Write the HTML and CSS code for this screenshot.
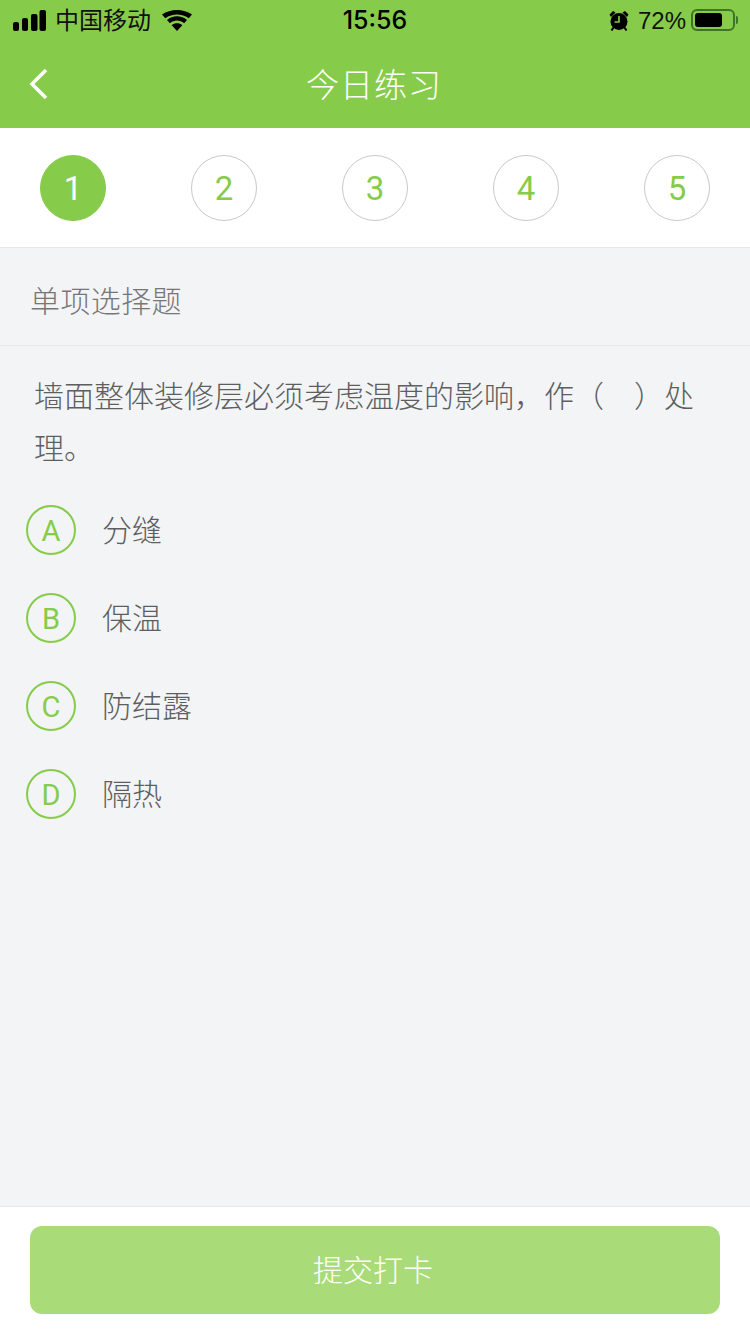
FILE: index.html
```html
<!DOCTYPE html>
<html lang="zh">
<head>
    <meta charset="UTF-8">
    <title>今日练习</title>
    <link rel="stylesheet" href="styles.css">
</head>
<body>
    <div id="page">
        <div id="header">
            <div id="statusBar">
                <div class="status-left">
                    <svg class="signal" width="33" height="21" viewBox="0 0 33 21">
                        <rect x="0" y="12" width="6" height="9" rx="2"/>
                        <rect x="9" y="8" width="6" height="13" rx="2"/>
                        <rect x="18" y="4" width="6.500" height="17" rx="2"/>
                        <rect x="26.500" y="0" width="6.500" height="21" rx="2"/>
                    </svg>
                    <span class="carrier">中国移动</span>
                    <svg class="wifi" width="30" height="21" viewBox="0 0 30 21">
                        <path d="M15 21l-5.300-5.800c3-2.600 7.600-2.600 10.600 0z"/>
                        <path d="M7.900 13.200l-2.900-3.200c5.700-4.900 14.300-4.900 20 0l-2.900 3.200c-4.100-3.500-10.100-3.500-14.200 0z"/>
                        <path d="M3.300 8.200l-3.300-3.600c8.500-6.100 21.500-6.100 30 0l-3.300 3.600c-6.900-5-16.500-5-23.400 0z"/>
                    </svg>
                </div>
                <div class="status-time">15:56</div>
                <div class="status-right">
                    <svg class="alarm" width="20" height="21" viewBox="0 0 20 21">
                        <path d="M0.500 4.500l3.500-3.500 2.500 1.500-4.500 4.500zM19.500 4.500l-3.500-3.500-2.500 1.500 4.500 4.500z"/>
                        <circle cx="10" cy="11.500" r="8.500"/>
                        <path d="M10 6v6h-4.500" fill="none" stroke="#86cc4a" stroke-width="1.600"/>
                        <path d="M4.500 17.500l-2 3M15.500 17.500l2 3" stroke="#000" stroke-width="2"/>
                    </svg>
                    <span class="battery-text">72%</span>
                    <div class="battery">
                        <div class="battery-fill"></div>
                    </div>
                    <div class="battery-cap"></div>
                </div>
            </div>
            <div id="navBar">
                <svg class="back" width="20" height="32" viewBox="0 0 20 32">
                    <path d="M17 2L3 16l14 14" fill="none" stroke="#fff" stroke-width="3.500"/>
                </svg>
                <h1>今日练习</h1>
            </div>
        </div>

        <div id="steps">
            <div class="step active">1</div>
            <div class="step">2</div>
            <div class="step">3</div>
            <div class="step">4</div>
            <div class="step">5</div>
        </div>

        <div id="main">
            <div class="type-title">单项选择题</div>
            <div class="question">墙面整体装修层必须考虑温度的影响，作（&emsp;）处理。</div>
            <ul class="options">
                <li><span class="letter">A</span><span class="answer">分缝</span></li>
                <li><span class="letter">B</span><span class="answer">保温</span></li>
                <li><span class="letter">C</span><span class="answer">防结露</span></li>
                <li><span class="letter">D</span><span class="answer">隔热</span></li>
            </ul>
        </div>

        <div id="footer">
            <button id="submitBtn">提交打卡</button>
        </div>
    </div>
</body>
</html>
```

FILE: styles.css
```css
* { box-sizing: border-box; }
body {
    margin: 0;
    padding: 0;
    font-family: "Liberation Sans", Arial, "Noto Sans CJK SC", sans-serif;
    background: #f2f4f6;
}
#page {
    width: 750px;
    height: 1334px;
    display: flex;
    flex-direction: column;
    overflow: hidden;
}

/* top green area */
#header {
    height: 128px;
    background: #86cc4a;
    flex-shrink: 0;
}
#statusBar {
    height: 40px;
    display: flex;
    align-items: center;
    justify-content: space-between;
    padding: 0 12px 0 13px;
    color: #000;
    position: relative;
}
.status-left, .status-right { display: flex; align-items: center; }
.signal { margin-right: 9px; }
.carrier { font-size: 24px; color: #111; margin-bottom: 3px; }
.wifi { margin-left: 11px; }
.status-time {
    position: absolute;
    left: 0;
    right: 0;
    text-align: center;
    font-size: 25px;
    font-family: Inter, "Liberation Sans", sans-serif;
    font-weight: 500;
}
.alarm { margin-right: 9px; }
.battery-text { font-size: 24px; color: #111; margin-right: 5px; padding-top: 1px; }
.battery {
    width: 44px;
    height: 22px;
    border: 2px solid #3f7327;
    border-radius: 6px;
    padding: 2px;
}
.battery-fill {
    width: 27px;
    height: 14px;
    background: #000;
    border-radius: 3px;
}
.battery-cap {
    width: 2px;
    height: 8px;
    margin-left: 1px;
    background: #3f7327;
    border-radius: 0 2px 2px 0;
}
#navBar {
    height: 88px;
    display: flex;
    align-items: center;
    justify-content: center;
    position: relative;
}
#navBar h1 {
    margin: 0 2px 2px 0;
    font-size: 33px;
    font-weight: 300;
    color: #fff;
    letter-spacing: 1px;
}
.back { position: absolute; left: 29px; top: 28px; }

/* step circles */
#steps {
    height: 120px;
    background: #fff;
    border-bottom: 1px solid #e6e7e9;
    padding: 27px 40px 0;
    display: flex;
    justify-content: space-between;
    flex-shrink: 0;
}
.step {
    width: 66px;
    height: 66px;
    border: 1px solid #c9c9c9;
    border-radius: 50%;
    display: flex;
    align-items: center;
    justify-content: center;
    font-family: Roboto, "Liberation Sans", sans-serif;
    font-size: 33px;
    color: #86cc4a;
}
.step.active {
    background: #86cc4a;
    border-color: #86cc4a;
    color: #fff;
}

#main { flex: 1; }
.type-title {
    height: 98px;
    line-height: 108px;
    padding-left: 30px;
    font-size: 30px;
    font-weight: 300;
    letter-spacing: 0.4px;
    color: #777;
    border-bottom: 1px solid #e6e7e9;
}
.question {
    padding: 25px 40px 0 34px;
    font-size: 30px;
    font-weight: 300;
    line-height: 52px;
    color: #5e5e5e;
}
.options {
    list-style: none;
    margin: 0;
    padding: 11px 0 0 26px;
}
.options li {
    height: 88px;
    display: flex;
    align-items: center;
}
.letter {
    width: 50px;
    height: 50px;
    border: 2px solid #86cc4a;
    border-radius: 50%;
    display: flex;
    align-items: center;
    justify-content: center;
    padding-top: 1px;
    font-family: Roboto, "Liberation Sans", sans-serif;
    font-size: 29px;
    color: #86cc4a;
    margin-right: 26px;
}
.answer { font-size: 30px; font-weight: 300; color: #5e5e5e; margin-bottom: 4px; }

#footer {
    height: 128px;
    background: #fff;
    border-top: 1px solid #e8e9eb;
    padding: 19px 30px 0;
    flex-shrink: 0;
}
#submitBtn {
    width: 690px;
    height: 88px;
    display: block;
    background: #a9dc78;
    border: none;
    border-radius: 12px;
    color: #fff;
    font-family: inherit;
    font-size: 30px;
    font-weight: 300;
    padding: 0 4px 4px 0;
}
```
